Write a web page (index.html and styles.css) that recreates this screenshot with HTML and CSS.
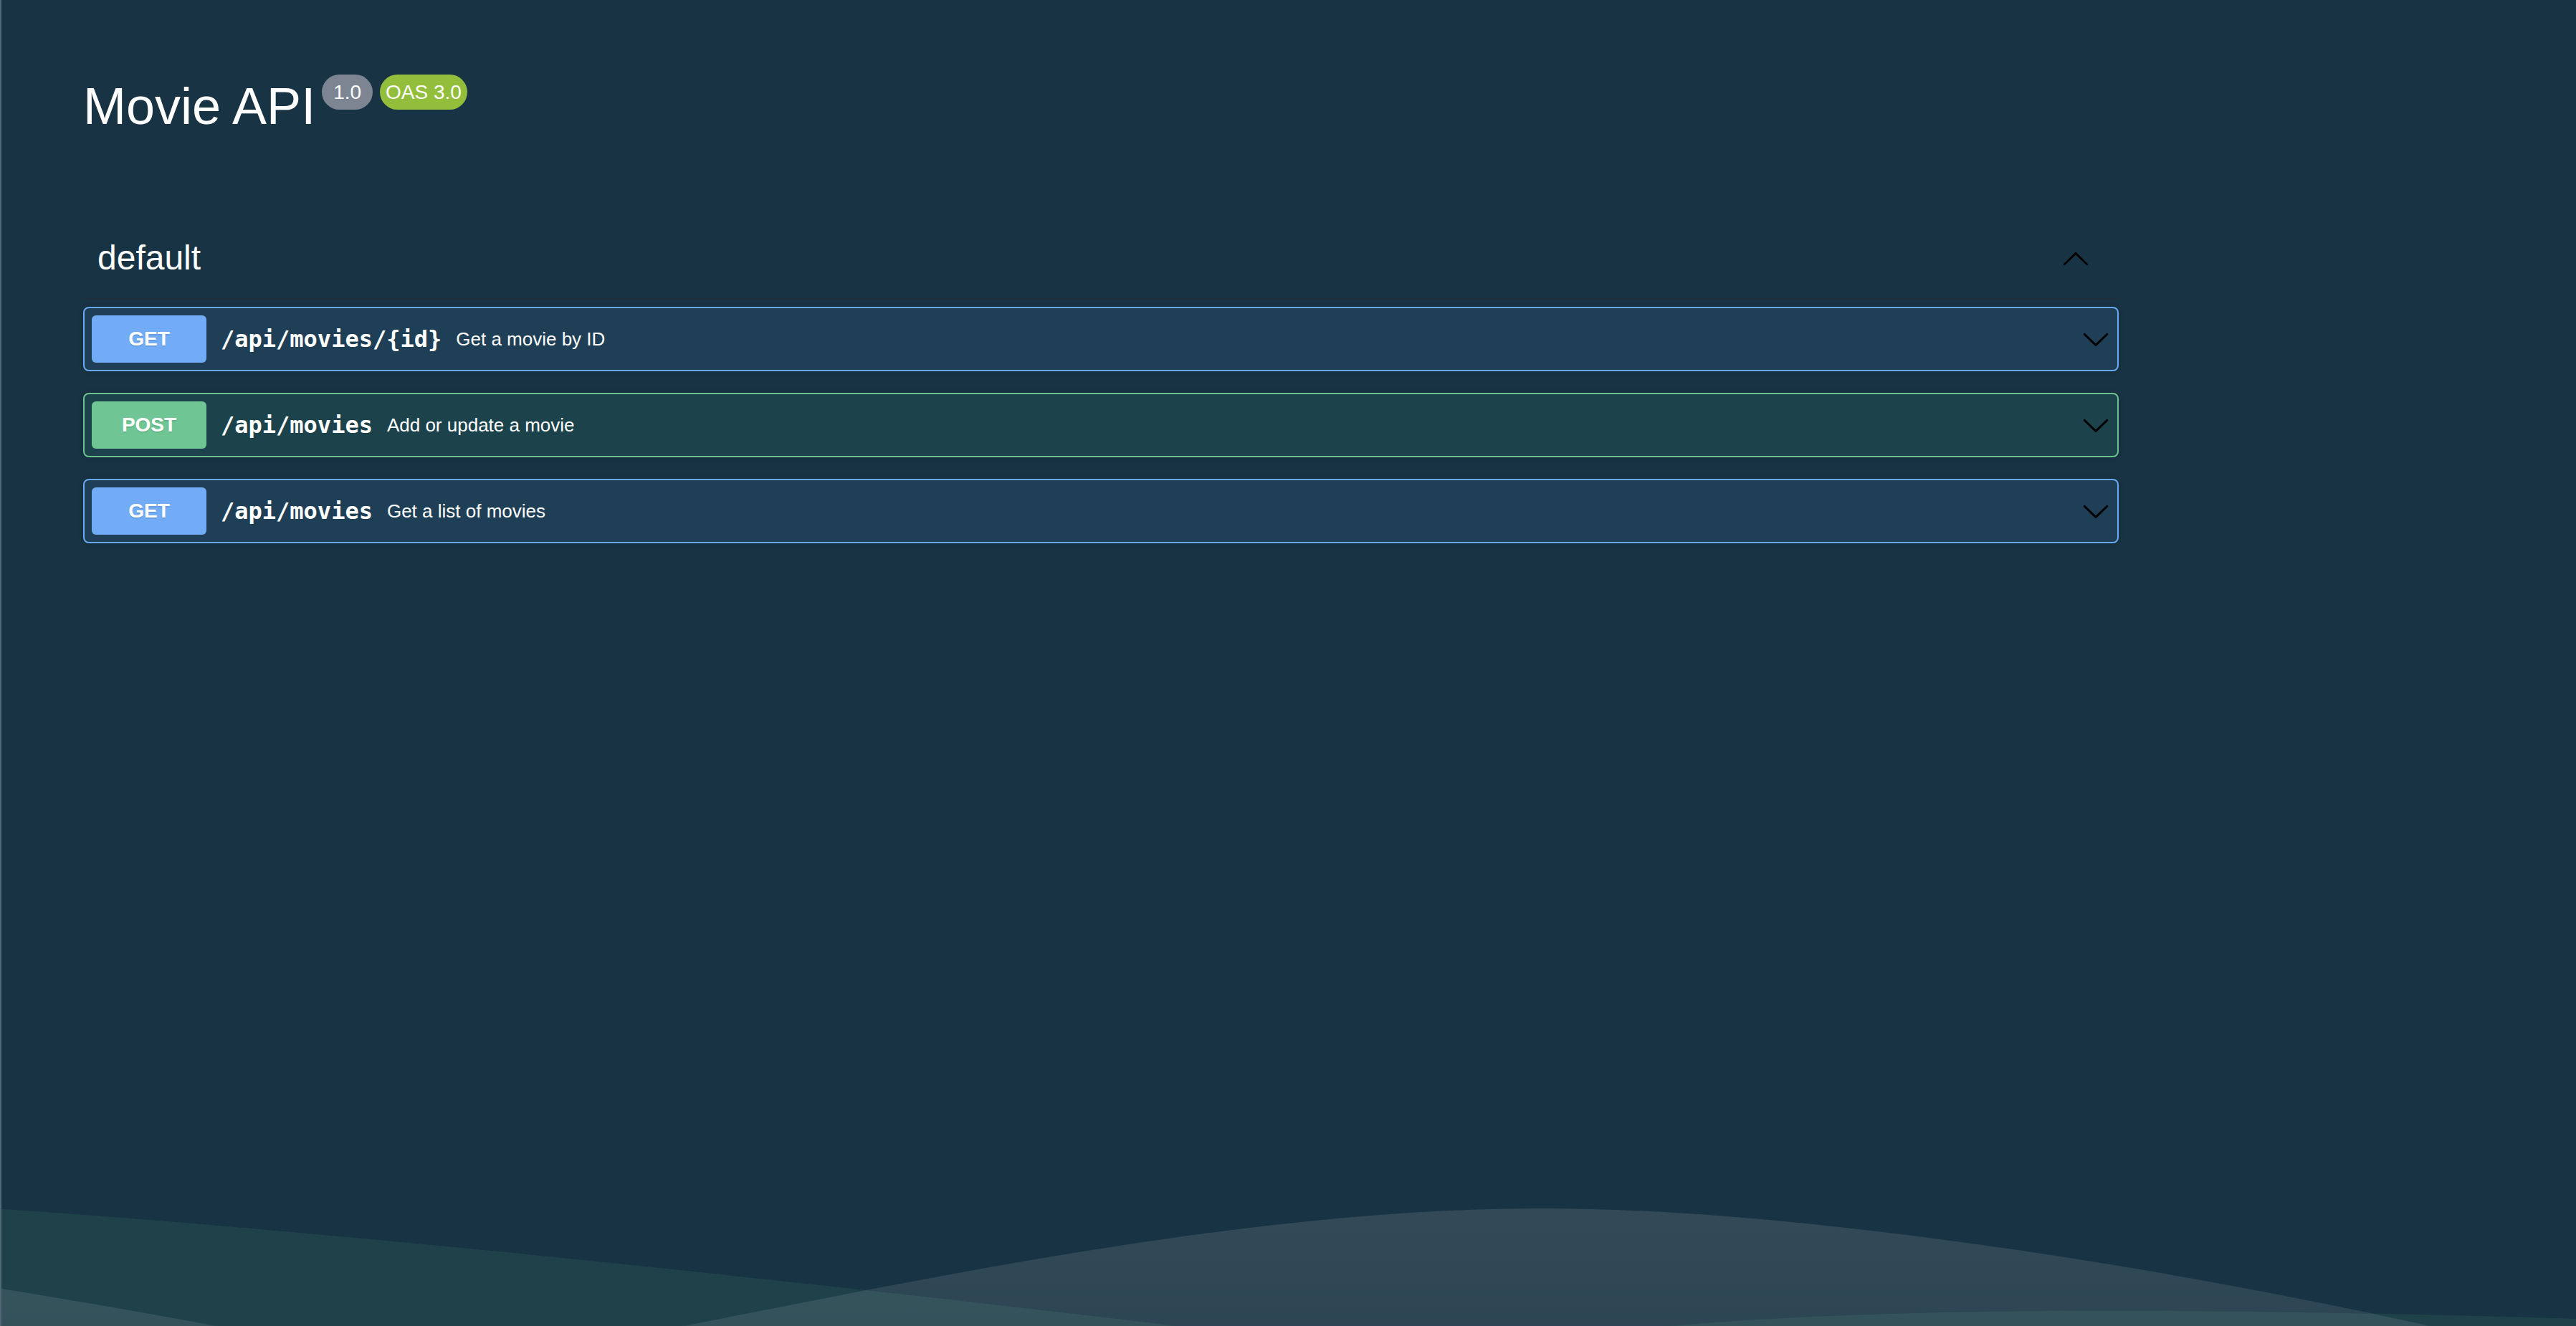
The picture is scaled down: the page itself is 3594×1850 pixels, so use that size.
FILE: index.html
```html
<!DOCTYPE html>
<html lang="en">
<head>
<meta charset="utf-8">
<title>Movie API</title>
<link rel="stylesheet" href="styles.css">
</head>
<body>
<svg class="waves" viewBox="0 1680 3594 170" preserveAspectRatio="none" aria-hidden="true">
  <defs>
    <linearGradient id="wg" x1="0" y1="1686" x2="0" y2="1850" gradientUnits="userSpaceOnUse">
      <stop offset="0" stop-color="#ffffff" stop-opacity="0.115"/>
      <stop offset="1" stop-color="#ffffff" stop-opacity="0.09"/>
    </linearGradient>
  </defs>
  <path class="teal" d="M0 1687 C400 1712 1100 1785 1640 1850 L0 1850 Z"/>
  <path class="teal" d="M2330 1850 C2600 1826 3000 1822 3594 1840 L3594 1850 Z"/>
  <path fill="url(#wg)" d="M953 1850 C1300 1782 1750 1686 2150 1686 C2550 1686 3100 1785 3390 1850 Z"/>
  <path fill="url(#wg)" d="M0 1798 C100 1814 220 1835 300 1850 L0 1850 Z"/>
</svg>

<div class="wrapper">
  <div class="info">
    <h2 class="title">Movie API</h2>
    <span class="badge version">1.0</span>
    <span class="badge oas">OAS 3.0</span>
  </div>

  <h3 class="tag">
    <span class="tag-name">default</span>
    <svg class="arrow" viewBox="0 0 20 20" width="40" height="40" aria-hidden="true"><path d="M17.418 14.908c.271.268.709.268.979 0s.271-.701 0-.969l-7.908-7.83c-.27-.268-.707-.268-.979 0l-7.908 7.83c-.27.268-.27.701 0 .969.271.268.709.268.979 0L10 7.767l7.418 7.141z"/></svg>
  </h3>

  <div class="op op-get">
    <span class="method">GET</span>
    <span class="path">/api/movies/{id}</span>
    <span class="desc">Get a movie by ID</span>
    <svg class="arrow" viewBox="0 0 20 20" width="40" height="40" aria-hidden="true"><path d="M17.418 6.109c.272-.268.709-.268.979 0s.271.701 0 .969l-7.908 7.83c-.27.268-.707.268-.979 0l-7.908-7.83c-.27-.268-.27-.701 0-.969.271-.268.709-.268.979 0L10 13.25l7.418-7.141z"/></svg>
  </div>

  <div class="op op-post">
    <span class="method">POST</span>
    <span class="path">/api/movies</span>
    <span class="desc">Add or update a movie</span>
    <svg class="arrow" viewBox="0 0 20 20" width="40" height="40" aria-hidden="true"><path d="M17.418 6.109c.272-.268.709-.268.979 0s.271.701 0 .969l-7.908 7.83c-.27.268-.707.268-.979 0l-7.908-7.83c-.27-.268-.27-.701 0-.969.271-.268.709-.268.979 0L10 13.25l7.418-7.141z"/></svg>
  </div>

  <div class="op op-get">
    <span class="method">GET</span>
    <span class="path">/api/movies</span>
    <span class="desc">Get a list of movies</span>
    <svg class="arrow" viewBox="0 0 20 20" width="40" height="40" aria-hidden="true"><path d="M17.418 6.109c.272-.268.709-.268.979 0s.271.701 0 .969l-7.908 7.83c-.27.268-.707.268-.979 0l-7.908-7.830c-.27-.268-.27-.701 0-.969.271-.268.709-.268.979 0L10 13.25l7.418-7.141z"/></svg>
  </div>
</div>
</body>
</html>
```

FILE: styles.css
```css
html, body {
  margin: 0;
  height: 100%;
}

body {
  box-sizing: border-box;
  position: relative;
  overflow: hidden;
  background: #183343;
  border-left: 2px solid #52687a;
  color: #ffffff;
  font-family: "Liberation Sans", Arial, sans-serif;
}

.waves {
  position: absolute;
  left: 0;
  bottom: 0;
  width: 100%;
  height: 170px;
  z-index: 0;
}

.waves .teal {
  fill: rgb(80, 170, 130);
  fill-opacity: 0.12;
}

.wrapper {
  position: relative;
  z-index: 1;
  width: 2840px;
  margin-left: 114px;
}

/* ---------- title ---------- */
.info {
  display: flex;
  align-items: flex-start;
  padding-top: 104px;
}

.title {
  margin: 8px 0 0 0;
  font-size: 72px;
  line-height: 72px;
  font-weight: normal;
  color: #ffffff;
}

.badge {
  display: inline-block;
  height: 49px;
  line-height: 49px;
  border-radius: 60px;
  font-size: 28px;
  color: #ffffff;
  white-space: nowrap;
}

.version {
  margin-left: 9px;
  padding: 0 16px;
  background: #7d8492;
}

.oas {
  margin-left: 10px;
  padding: 0 8px;
  background: #93be3b;
}

/* ---------- tag heading ---------- */
.tag {
  box-sizing: border-box;
  display: flex;
  align-items: center;
  height: 114px;
  margin: 120px 0 10px 0;
  padding: 0 40px 0 20px;
  border-bottom: 2px solid #1f2f3d;
  font-size: 48px;
  line-height: 48px;
  font-weight: normal;
}

.tag-name {
  flex: 1;
}

.arrow {
  flex: none;
  display: block;
  fill: #000000;
}

/* ---------- operations ---------- */
.op {
  display: flex;
  align-items: center;
  padding: 10px;
  margin-bottom: 30px;
  border: 2px solid;
  border-radius: 8px;
  box-shadow: 0 0 6px rgba(0, 0, 0, 0.19);
}

.op-get {
  background: rgba(97, 175, 254, 0.1);
  border-color: #68a9f2;
}

.op-post {
  background: rgba(73, 204, 144, 0.1);
  border-color: #6cc28f;
}

.method {
  flex: none;
  width: 160px;
  height: 66px;
  line-height: 66px;
  border-radius: 6px;
  text-align: center;
  font-size: 28px;
  font-weight: bold;
  color: #ffffff;
  text-shadow: 0 2px 0 rgba(0, 0, 0, 0.1);
}

.op-get .method {
  background: #72acf6;
}

.op-post .method {
  background: #6fc594;
}

.path {
  flex: none;
  padding: 0 20px;
  font-family: "DejaVu Sans Mono", "Liberation Mono", monospace;
  font-size: 32px;
  font-weight: bold;
  color: #ffffff;
}

.desc {
  flex: 1;
  font-size: 26px;
  color: #ffffff;
}
```
